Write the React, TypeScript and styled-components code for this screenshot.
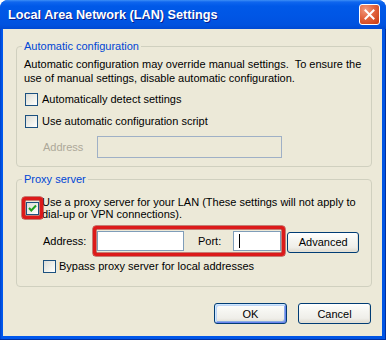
import React from 'react';
import styled, { createGlobalStyle } from 'styled-components';

const GlobalStyle = createGlobalStyle`
  html, body { margin: 0; padding: 0; background: #ffffff; }
  body { font-family: "Liberation Sans", Arial, sans-serif; font-size: 11px; color: #000; }
  * { box-sizing: border-box; }
`;

const Window = styled.div`
  width: 386px;
  height: 340px;
  display: flex;
  flex-direction: column;
  border-radius: 8px 8px 0 0;
  overflow: hidden;
  background: #0054e3;
`;

const TitleBar = styled.div`
  height: 29px;
  flex: none;
  display: flex;
  align-items: center;
  justify-content: space-between;
  padding: 1px 6px 0 8px;
  background: linear-gradient(
    180deg,
    #3d8ff5 0px,
    #0f66ee 2px,
    #0059e8 6px,
    #0055e4 18px,
    #0052df 25px,
    #0049d2 29px
  );
`;

const Title = styled.span`
  font-family: "Liberation Sans", Arial, sans-serif;
  font-weight: bold;
  font-size: 12.7px;
  color: #ffffff;
  text-shadow: 1px 1px 0 #0a1e8c;
  white-space: nowrap;
`;

const CloseButton = styled.div`
  width: 21px;
  height: 21px;
  border: 1px solid #ffffff;
  border-radius: 3px;
  background: radial-gradient(circle at 30% 25%, #f29a7e 0%, #e2643f 45%, #c7390f 100%);
  display: flex;
  align-items: center;
  justify-content: center;
  margin-top: -1px;
`;

const Frame = styled.div`
  flex: 1;
  display: flex;
  padding: 0 4px 4px 3px;
  background: linear-gradient(90deg, #0040c8 0px, #0058ee 2px, #0054e3 100%);
  box-shadow: inset 0 -1px 0 #002fa0, inset -1px 0 0 #002fa0;
`;

const Body = styled.div`
  flex: 1;
  display: flex;
  flex-direction: column;
  background: #ece9d8;
  padding: 11px 10px 0 13px;
`;

const Group = styled.fieldset<{ $bottom: number }>`
  margin: 0;
  min-width: 0;
  border: 1px solid #d0d0bf;
  border-radius: 4px;
  padding: 4px 8px ${(p) => p.$bottom}px 7px;
  display: flex;
  flex-direction: column;
  & + & {
    margin-top: 6px;
  }
`;

const Legend = styled.legend`
  color: #0046d5;
  padding: 0 2px;
  margin-left: -2px;
  line-height: 13px;
  font-size: 11px;
`;

const Description = styled.div`
  line-height: 14px;
  white-space: nowrap;
`;

const CheckRow = styled.div<{ $top: number; $indent?: number }>`
  display: flex;
  align-items: center;
  margin-top: ${(p) => p.$top}px;
  margin-left: ${(p) => p.$indent ?? 1}px;
  height: 13px;
  line-height: 13px;
  white-space: nowrap;
`;

const MultiCheckRow = styled.div`
  display: flex;
  align-items: center;
  margin-top: 6px;
  margin-left: 2px;
`;

const BoxWrap = styled.span`
  position: relative;
  display: inline-flex;
  flex: none;
`;

const Box = styled.span`
  width: 13px;
  height: 13px;
  flex: none;
  border: 1px solid #1c5180;
  background: linear-gradient(135deg, #dcdcd7 0%, #f0f0ea 55%, #ffffff 100%);
  display: inline-flex;
  align-items: center;
  justify-content: center;
`;

const Highlight = styled.span`
  position: absolute;
  left: -4px;
  top: -5px;
  right: -4px;
  bottom: -4px;
  border: 3px solid #dc1a1a;
  border-radius: 3px;
  box-shadow: 0 0 0 0.5px #a01010, inset 0 0 0 0.5px #a01010;
`;

const Label = styled.span<{ $gap?: number }>`
  margin-left: ${(p) => p.$gap ?? 4}px;
`;

const TwoLineLabel = styled.span`
  margin-left: 3px;
  line-height: 12px;
  white-space: nowrap;
`;

const FieldRow = styled.div<{ $top: number; $height: number }>`
  display: flex;
  align-items: center;
  margin-top: ${(p) => p.$top}px;
  height: ${(p) => p.$height}px;
`;

const FieldLabel = styled.span<{ $disabled?: boolean }>`
  width: 54px;
  margin-left: 19px;
  flex: none;
  color: ${(p) => (p.$disabled ? '#aca899' : '#000')};
`;

const TextBox = styled.div<{ $width: number; $height: number; $disabled?: boolean }>`
  width: ${(p) => p.$width}px;
  height: ${(p) => p.$height}px;
  flex: none;
  border: 1px solid ${(p) => (p.$disabled ? '#9fb0c6' : '#7f9db9')};
  background: ${(p) => (p.$disabled ? '#ece9d8' : '#ffffff')};
  display: flex;
  align-items: center;
  padding-left: 5px;
`;

const Caret = styled.span`
  width: 1px;
  height: 14px;
  background: #000;
`;

const RedFrame = styled.div`
  display: flex;
  align-items: center;
  border: 3px solid #dc1a1a;
  border-radius: 3px;
  padding: 2px 1px;
  margin-left: -4px;
  box-shadow: 0 0 0 0.5px #a01010, inset 0 0 0 0.5px #a01010;
`;

const PortLabel = styled.span`
  margin: 0 12px 0 14px;
  white-space: nowrap;
`;

const Button = styled.button<{ $default?: boolean }>`
  width: 73px;
  height: 21px;
  flex: none;
  padding: 0;
  border: 1px solid #003c74;
  border-radius: 3px;
  font-family: "Liberation Sans", Arial, sans-serif;
  font-size: 11px;
  color: #000;
  background: linear-gradient(180deg, #ffffff 0%, #f6f6f2 35%, #efeee9 75%, #e3e0d6 92%, #d6d0c5 100%);
  box-shadow: ${(p) =>
    p.$default
      ? 'inset 1px 1px 0 #cee7ff, inset -1px -1px 0 #6982ee, inset 2px 2px 0 #bcd4f6, inset -2px -2px 0 #89ade4'
      : 'inset -1px -1px 0 #e3e0d6'};
`;

const AdvancedButton = styled(Button)`
  margin-left: 2px;
  margin-top: 2px;
  width: 72px;
`;

const ButtonRow = styled.div`
  display: flex;
  justify-content: flex-end;
  gap: 11px;
  margin-top: 16px;
  padding-right: 1px;
`;

const CheckMark = () => (
  <svg width="9" height="9" viewBox="0 0 9 9">
    <path d="M1 4 L3.3 6.5 L8 1.5" fill="none" stroke="#21a121" strokeWidth="2" />
  </svg>
);

const CloseX = () => (
  <svg width="11" height="11" viewBox="0 0 11 11">
    <path d="M1.5 1.5 L9.5 9.5 M9.5 1.5 L1.5 9.5" stroke="#ffffff" strokeWidth="2" strokeLinecap="square" />
  </svg>
);

export default function App() {
  return (
    <>
      <GlobalStyle />
      <Window>
        <TitleBar>
          <Title>Local Area Network (LAN) Settings</Title>
          <CloseButton>
            <CloseX />
          </CloseButton>
        </TitleBar>
        <Frame>
          <Body>
            <Group $bottom={8}>
              <Legend>Automatic configuration</Legend>
              <Description>
                Automatic configuration may override manual settings.{'\u00a0 '}To ensure the
                <br />
                use of manual settings, disable automatic configuration.
              </Description>
              <CheckRow $top={8}>
                <Box />
                <Label>Automatically detect settings</Label>
              </CheckRow>
              <CheckRow $top={9}>
                <Box />
                <Label>Use automatic configuration script</Label>
              </CheckRow>
              <FieldRow $top={8} $height={22}>
                <FieldLabel $disabled>Address</FieldLabel>
                <TextBox $width={185} $height={22} $disabled />
              </FieldRow>
            </Group>
            <Group $bottom={13}>
              <Legend>Proxy server</Legend>
              <MultiCheckRow>
                <BoxWrap>
                  <Box>
                    <CheckMark />
                  </Box>
                  <Highlight />
                </BoxWrap>
                <TwoLineLabel>
                  Use a proxy server for your LAN (These settings will not apply to
                  <br />
                  dial-up or VPN connections).
                </TwoLineLabel>
              </MultiCheckRow>
              <FieldRow $top={6} $height={30}>
                <FieldLabel>Address:</FieldLabel>
                <RedFrame>
                  <TextBox $width={87} $height={20} />
                  <PortLabel>Port:</PortLabel>
                  <TextBox $width={48} $height={20}>
                    <Caret />
                  </TextBox>
                </RedFrame>
                <AdvancedButton>Advanced</AdvancedButton>
              </FieldRow>
              <CheckRow $top={4} $indent={19}>
                <Box />
                <Label $gap={3}>Bypass proxy server for local addresses</Label>
              </CheckRow>
            </Group>
            <ButtonRow>
              <Button $default>OK</Button>
              <Button>Cancel</Button>
            </ButtonRow>
          </Body>
        </Frame>
      </Window>
    </>
  );
}
